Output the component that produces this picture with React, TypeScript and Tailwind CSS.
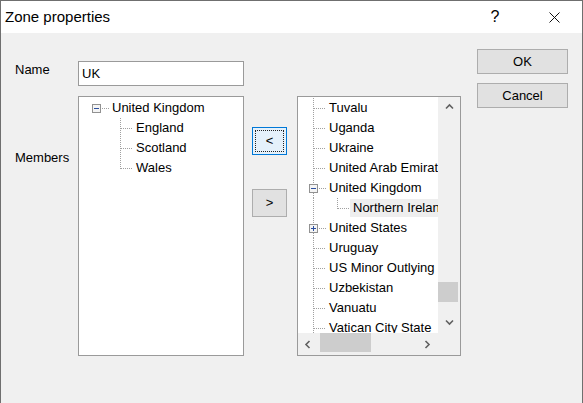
import React from "react";

const LINE = "#a0a0a0";

type Node = {
  label: string;
  level: 0 | 1;
  box?: "minus" | "plus";
  last?: boolean;
  selected?: boolean;
};

const leftNodes: Node[] = [
  { label: "United Kingdom", level: 0, box: "minus" },
  { label: "England", level: 1 },
  { label: "Scotland", level: 1 },
  { label: "Wales", level: 1, last: true },
];

const rightNodes: Node[] = [
  { label: "Tuvalu", level: 0 },
  { label: "Uganda", level: 0 },
  { label: "Ukraine", level: 0 },
  { label: "United Arab Emirates", level: 0 },
  { label: "United Kingdom", level: 0, box: "minus" },
  { label: "Northern Ireland", level: 1, last: true, selected: true },
  { label: "United States", level: 0, box: "plus" },
  { label: "Uruguay", level: 0 },
  { label: "US Minor Outlying Islands", level: 0 },
  { label: "Uzbekistan", level: 0 },
  { label: "Vanuatu", level: 0 },
  { label: "Vatican City State", level: 0 },
];

function ExpandBox({ x, kind }: { x: number; kind: "minus" | "plus" }) {
  return (
    <g>
      <rect x={x + 0.5} y={6.5} width={8} height={8} fill="#f4f4f4" stroke="#919191" />
      <line x1={x + 2} y1={10.5} x2={x + 7} y2={10.5} stroke="#2c4f9e" />
      {kind === "plus" && <line x1={x + 4.5} y1={8} x2={x + 4.5} y2={13} stroke="#2c4f9e" />}
    </g>
  );
}

// connector drawing for one row of a tree; rootX is the level-0 line, the child line sits 24px right
function Connector({ node, rootX, rootLine }: { node: Node; rootX: number; rootLine: boolean }) {
  const childX = rootX + 24;
  const width = node.level === 0 ? rootX + 16 : childX + 13;
  const dash = { stroke: LINE, strokeDasharray: "1 1", shapeRendering: "crispEdges" as const };
  return (
    <svg width={width} height={20} className="shrink-0">
      {rootLine && node.level === 0 && !node.box && (
        <line x1={rootX + 0.5} y1={0} x2={rootX + 0.5} y2={20} {...dash} />
      )}
      {rootLine && node.level === 0 && node.box && (
        <>
          <line x1={rootX + 0.5} y1={0} x2={rootX + 0.5} y2={6} {...dash} />
          <line x1={rootX + 0.5} y1={15} x2={rootX + 0.5} y2={20} {...dash} />
        </>
      )}
      {rootLine && node.level === 1 && (
        <line x1={rootX + 0.5} y1={0} x2={rootX + 0.5} y2={20} {...dash} />
      )}
      {node.level === 0 && (
        <line x1={node.box ? rootX + 6 : rootX + 1} y1={10.5} x2={rootX + 13} y2={10.5} {...dash} />
      )}
      {node.level === 0 && node.box && <ExpandBox x={rootX - 4} kind={node.box} />}
      {node.level === 1 && (
        <>
          <line x1={childX + 0.5} y1={0} x2={childX + 0.5} y2={node.last ? 11 : 20} {...dash} />
          <line x1={childX + 1} y1={10.5} x2={childX + 13} y2={10.5} {...dash} />
        </>
      )}
    </svg>
  );
}

function TreeRow({ node, rootX, rootLine }: { node: Node; rootX: number; rootLine: boolean }) {
  return (
    <div className="flex h-[20px] items-center whitespace-nowrap">
      <Connector node={node} rootX={rootX} rootLine={rootLine} />
      {node.selected ? (
        <span className="flex h-[18px] shrink-0 items-center bg-[#eeeeee] pl-[3px] pr-[3px]">
          {node.label}
        </span>
      ) : (
        <span className={node.level === 1 ? "pl-[3px]" : ""}>{node.label}</span>
      )}
    </div>
  );
}

function Chevron({ dir }: { dir: "up" | "down" | "left" | "right" }) {
  const pts = {
    up: "1,5.5 4.5,2 8,5.5",
    down: "1,2.5 4.5,6 8,2.5",
    left: "5.5,1 2,4.5 5.5,8",
    right: "2.5,1 6,4.5 2.5,8",
  }[dir];
  return (
    <svg width={9} height={9}>
      <polyline points={pts} fill="none" stroke="#606060" strokeWidth={1.6} />
    </svg>
  );
}

function Button({ children, focused }: { children: React.ReactNode; focused?: boolean }) {
  if (focused) {
    return (
      <div className="h-[28px] border border-[#0078d7] bg-[#e5f1fb] p-[2px]">
        <div className="flex h-full items-center justify-center border border-dotted border-[#222]">
          {children}
        </div>
      </div>
    );
  }
  return (
    <div className="flex h-full items-center justify-center border border-[#adadad] bg-[#e1e1e1]">
      {children}
    </div>
  );
}

export default function App() {
  return (
    <div className="flex h-[403px] w-[583px] flex-col border-x border-t border-[#6f6f6f] bg-[#f0f0f0] font-['Liberation_Sans',Arial,sans-serif] text-[13px] text-black">
      {/* title bar */}
      <div className="flex h-[32px] shrink-0 items-center bg-white">
        <span className="pl-[4px] text-[15px]">Zone properties</span>
        <div className="flex-1" />
        <span className="w-[46px] text-center text-[16px]">?</span>
        <div className="ml-[13px] mr-[5px] flex w-[46px] justify-center">
          <svg width={11} height={11}>
            <path d="M0.5 0.5 L10.5 10.5 M10.5 0.5 L0.5 10.5" stroke="#111" strokeWidth={1} />
          </svg>
        </div>
      </div>

      <div className="flex pl-[14px]">
        {/* labels */}
        <div className="flex w-[63px] flex-col leading-[16px]">
          <span className="mt-[29px]">Name</span>
          <span className="mt-[72px]">Members</span>
        </div>

        {/* name + current members */}
        <div className="flex w-[166px] flex-col">
          <div className="mt-[28px] flex h-[25px] items-center border border-[#9a9a9a] bg-white pl-[3px]">
            UK
          </div>
          <div className="mt-[10px] h-[260px] border border-[#9a9a9a] bg-white pt-[1px]">
            {leftNodes.map((n) => (
              <TreeRow key={n.label} node={n} rootX={17} rootLine={false} />
            ))}
          </div>
        </div>

        {/* move buttons */}
        <div className="ml-[8px] flex w-[35px] flex-col">
          <div className="mt-[94px]">
            <Button focused>&lt;</Button>
          </div>
          <div className="mt-[34px] h-[28px]">
            <Button>&gt;</Button>
          </div>
        </div>

        {/* all zones tree */}
        <div className="ml-[10px] mt-[63px] flex h-[260px] w-[164px] flex-col border border-[#9a9a9a] bg-white">
          <div className="flex h-[236px]">
            <div className="w-[140px] overflow-hidden pt-[1px]">
              {rightNodes.map((n) => (
                <TreeRow key={n.label} node={n} rootX={15} rootLine />
              ))}
            </div>
            <div className="flex flex-1 flex-col bg-[#f0f0f0]">
              <div className="flex h-[21px] items-center justify-center">
                <Chevron dir="up" />
              </div>
              <div className="flex-1" />
              <div className="mr-[2px] h-[20px] bg-[#cdcdcd]" />
              <div className="h-[10px]" />
              <div className="flex h-[21px] items-center justify-center">
                <Chevron dir="down" />
              </div>
            </div>
          </div>
          <div className="flex flex-1 bg-[#f0f0f0]">
            <div className="flex w-[140px] items-center">
              <div className="flex w-[21px] justify-center">
                <Chevron dir="left" />
              </div>
              <div className="ml-[1px] h-[19px] w-[51px] self-start bg-[#cdcdcd]" />
              <div className="flex-1" />
              <div className="flex w-[21px] justify-center">
                <Chevron dir="right" />
              </div>
            </div>
            <div className="flex-1" />
          </div>
        </div>

        {/* dialog buttons */}
        <div className="ml-[16px] flex w-[91px] flex-col">
          <div className="mt-[16px] h-[25px]">
            <Button>OK</Button>
          </div>
          <div className="mt-[9px] h-[25px]">
            <Button>Cancel</Button>
          </div>
        </div>
      </div>
    </div>
  );
}
